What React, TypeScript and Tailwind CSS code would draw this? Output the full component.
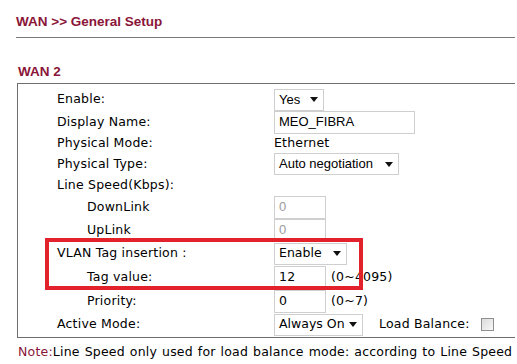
const Arrow = () => (
	<svg width="8" height="5" viewBox="0 0 8 5" className="ml-auto mr-[5px] shrink-0">
		<path d="M0 0 L8 0 L4 5 Z" fill="#111" />
	</svg>
);

const arial = { fontFamily: '"Liberation Sans", Arial, sans-serif' };

const Select = ({ value, w, sans }: { value: string; w: string; sans?: boolean }) => (
	<div className={`flex items-center h-[22px] border border-[#cfcfcf] bg-white pl-[4px] whitespace-nowrap ${w}`}>
		<span className={sans ? 'text-[13px] tracking-normal' : 'tracking-normal'} style={sans ? arial : undefined}>
			{value}
		</span>
		<Arrow />
	</div>
);

const Input = ({ value, w, muted, sans }: { value: string; w: string; muted?: boolean; sans?: boolean }) => (
	<div
		className={`flex items-center h-[23px] border border-[#cfcfcf] bg-white pl-[4px] whitespace-nowrap ${w} ${
			muted ? 'text-[#9a9a9a]' : 'text-black'
		} ${sans ? 'text-[13px] tracking-normal' : ''}`}
		style={sans ? arial : undefined}
	>
		{value}
	</div>
);

interface RowProps {
	label: string;
	h: string;
	indent?: boolean;
	children?: React.ReactNode;
}

const Row = ({ label, h, indent, children }: RowProps) => (
	<div className={`flex items-center ${h}`}>
		<div className={`w-[217px] shrink-0 whitespace-nowrap ${indent ? 'pl-[30px]' : ''}`}>{label}</div>
		<div className="flex items-center whitespace-nowrap">{children}</div>
	</div>
);

const App = () => {
	return (
		<div
			className="relative w-[517px] h-[364px] overflow-hidden bg-white text-[12.5px] tracking-[0.2px] text-black"
			style={{ fontFamily: '"DejaVu Sans", Verdana, sans-serif' }}
		>
			<div
				className="pl-[16px] pt-[14px] h-[30px] leading-[16px] text-[13.5px] tracking-normal font-bold text-[#8a1538]"
				style={arial}
			>
				WAN &gt;&gt; General Setup
			</div>
			<div className="ml-[16px] mt-[7px] w-[499px] h-px bg-[#7a7a7a]" />
			<div
				className="ml-[18px] mt-[26px] h-[16px] leading-[16px] text-[13.5px] tracking-normal font-bold text-[#8a1538]"
				style={arial}
			>
				WAN 2
			</div>
			<div className="ml-[17px] mt-[3px] w-[498px] border-l border-t border-b border-[#6e6e6e] pl-[39px] pt-[4px] pb-px">
				<Row label="Enable:" h="h-[23px]">
					<Select value="Yes" w="w-[50px]" sans />
				</Row>
				<Row label="Display Name:" h="h-[22px]">
					<Input value="MEO_FIBRA" w="w-[141px]" sans />
				</Row>
				<Row label="Physical Mode:" h="h-[21px]">
					<span>Ethernet</span>
				</Row>
				<Row label="Physical Type:" h="h-[20px]">
					<Select value="Auto negotiation" w="w-[125px]" sans />
				</Row>
				<Row label="Line Speed(Kbps):" h="h-[22px]" />
				<Row label="DownLink" h="h-[22px]" indent>
					<Input value="0" w="w-[52px]" muted sans />
				</Row>
				<Row label="UpLink" h="h-[24px]" indent>
					<Input value="0" w="w-[52px]" muted sans />
				</Row>
				<Row label="VLAN Tag insertion :" h="h-[23px]">
					<Select value="Enable" w="w-[73px]" />
				</Row>
				<Row label="Tag value:" h="h-[24px]" indent>
					<Input value="12" w="w-[52px]" />
					<span className="ml-[5px]">(0~4095)</span>
				</Row>
				<Row label="Priority:" h="h-[24px]" indent>
					<Input value="0" w="w-[52px]" />
					<span className="ml-[5px]">(0~7)</span>
				</Row>
				<Row label="Active Mode:" h="h-[23px]">
					<Select value="Always On" w="w-[89px]" />
					<span className="ml-[16px]">Load Balance:</span>
					<span className="ml-[11px] w-[13px] h-[13px] border border-[#8f8f8f] bg-gradient-to-br from-[#dcdcdc] to-[#f7f7f7]" />
				</Row>
			</div>
			<div className="ml-[18px] mt-[6px] h-[16px] leading-[16px] whitespace-nowrap [word-spacing:0.8px]">
				<span className="text-[#8a1538]">Note:</span>Line Speed only used for load balance mode: according to Line Speed
			</div>
			<div className="absolute left-[45px] top-[238px] w-[318px] h-[52px] border-4 border-[#e2222b]" />
		</div>
	);
};

export default App;
